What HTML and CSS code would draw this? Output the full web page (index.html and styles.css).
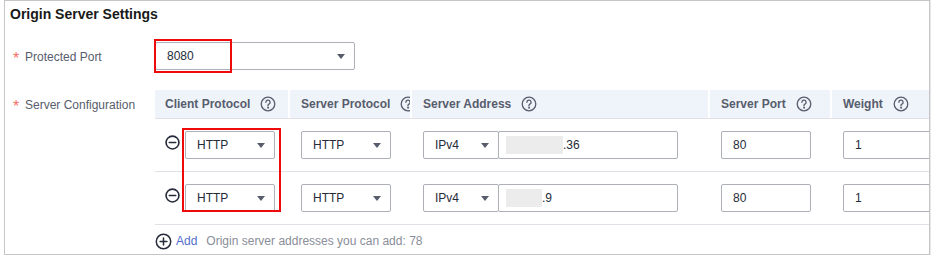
FILE: index.html
```html
<!DOCTYPE html>
<html lang="en">
<head>
  <meta charset="UTF-8">
  <title>Origin Server Settings</title>
  <link rel="stylesheet" href="styles.css">
</head>
<body>
  <div class="panel">
    <h3 class="title">Origin Server Settings</h3>

    <div class="form-row">
      <div class="label"><span class="req">*</span>Protected Port</div>
      <div class="select port-select"><span>8080</span></div>
    </div>

    <div class="form-row config-row">
      <div class="label"><span class="req">*</span>Server Configuration</div>
      <div class="table">
        <div class="thead">
          <div class="th">Client Protocol <svg class="help" viewBox="0 0 16 16"><circle cx="8" cy="8" r="6.8"/><path d="M5.9 6.3a2.1 2.1 0 1 1 3 1.9c-.6.3-.9.7-.9 1.4v.5"/><circle class="dot" cx="8" cy="11.8" r=".55"/></svg></div>
          <div class="th">Server Protocol <svg class="help" viewBox="0 0 16 16"><circle cx="8" cy="8" r="6.8"/><path d="M5.9 6.3a2.1 2.1 0 1 1 3 1.9c-.6.3-.9.7-.9 1.4v.5"/><circle class="dot" cx="8" cy="11.8" r=".55"/></svg></div>
          <div class="th">Server Address <svg class="help" viewBox="0 0 16 16"><circle cx="8" cy="8" r="6.8"/><path d="M5.9 6.3a2.1 2.1 0 1 1 3 1.9c-.6.3-.9.7-.9 1.4v.5"/><circle class="dot" cx="8" cy="11.8" r=".55"/></svg></div>
          <div class="th">Server Port <svg class="help" viewBox="0 0 16 16"><circle cx="8" cy="8" r="6.8"/><path d="M5.9 6.3a2.1 2.1 0 1 1 3 1.9c-.6.3-.9.7-.9 1.4v.5"/><circle class="dot" cx="8" cy="11.8" r=".55"/></svg></div>
          <div class="th">Weight <svg class="help" viewBox="0 0 16 16"><circle cx="8" cy="8" r="6.8"/><path d="M5.9 6.3a2.1 2.1 0 1 1 3 1.9c-.6.3-.9.7-.9 1.4v.5"/><circle class="dot" cx="8" cy="11.8" r=".55"/></svg></div>
        </div>

        <div class="tr">
          <div class="td first">
            <svg class="remove" viewBox="0 0 14 14"><circle cx="7" cy="7" r="6"/><path d="M4 7h6"/></svg>
            <div class="select proto"><span>HTTP</span></div>
          </div>
          <div class="td"><div class="select proto"><span>HTTP</span></div></div>
          <div class="td">
            <div class="select ipver"><span>IPv4</span></div>
            <div class="input address"><span class="masked w57"></span>.36</div>
          </div>
          <div class="td"><div class="input small">80</div></div>
          <div class="td"><div class="input small">1</div></div>
        </div>

        <div class="tr">
          <div class="td first">
            <svg class="remove" viewBox="0 0 14 14"><circle cx="7" cy="7" r="6"/><path d="M4 7h6"/></svg>
            <div class="select proto"><span>HTTP</span></div>
          </div>
          <div class="td"><div class="select proto"><span>HTTP</span></div></div>
          <div class="td">
            <div class="select ipver"><span>IPv4</span></div>
            <div class="input address"><span class="masked w36"></span>.9</div>
          </div>
          <div class="td"><div class="input small">80</div></div>
          <div class="td"><div class="input small">1</div></div>
        </div>

        <div class="add-row">
          <svg class="add-icon" viewBox="0 0 16 16"><circle cx="8" cy="8" r="6.8"/><path d="M8 4.8v6.4M4.8 8h6.4"/></svg>
          <a class="add-link" href="#">Add</a>
          <span class="add-hint">Origin server addresses you can add: 78</span>
        </div>
      </div>
    </div>

    <!-- highlight marks -->
    <div class="mark mark-port"></div>
    <div class="mark mark-proto"></div>
  </div>
</body>
</html>
```

FILE: styles.css
```css
* { margin: 0; padding: 0; box-sizing: border-box; }
body {
  background: #fff;
  font-family: "Liberation Sans", Arial, sans-serif;
  font-size: 12px;
  color: #252b3a;
}
.panel {
  position: relative;
  width: 926px;
  height: 255px;
  margin-left: 4px;
  border: 1px solid #c6c6c6;
  box-shadow: 1px 0 0 #e6e6e6;
  overflow: hidden;
}
.title {
  font-size: 14px;
  font-weight: bold;
  line-height: 20px;
  padding: 3px 0 0 5px;
  color: #191919;
}
.form-row {
  display: flex;
  align-items: flex-start;
  margin-top: 18px;
}
.config-row { margin-top: 19px; }
.label {
  width: 150px;
  flex: none;
  padding-left: 8px;
  line-height: 28px;
  color: #575d6c;
}
.req {
  display: inline-block;
  width: 7px;
  color: #f66f6a;
  font-size: 16px;
  margin-right: 5px;
  position: relative;
  top: 3px;
}

/* select / input mocks */
.select, .input {
  height: 28px;
  border: 1px solid #adb0b8;
  border-radius: 2px;
  background: #fff;
  display: flex;
  align-items: center;
  color: #252b3a;
  flex: none;
}
.select {
  justify-content: space-between;
  padding: 0 9px 0 11px;
}
.select::after {
  content: "";
  border-left: 4px solid transparent;
  border-right: 4px solid transparent;
  border-top: 5px solid #575d6c;
}
.port-select { width: 200px; }
.proto { width: 90px; }
.ipver { width: 76px; }
.input { padding: 0 11px; }
.small { width: 90px; }
.address {
  width: 180px;
  margin-left: -1px;
  padding-left: 7px;
}
.masked {
  display: inline-block;
  height: 18px;
  background: #ececec;
}
.w57 { width: 57px; }
.w36 { width: 36px; }

/* table */
.table {
  flex: none;
  width: 820px;
}
.thead, .tr {
  display: grid;
  grid-template-columns: 135px 122px 298px 122px 143px;
  border-bottom: 1px solid #dfe1e6;
}
.thead {
  height: 29px;
  background: #eff3fa;
}
.th {
  display: flex;
  align-items: center;
  gap: 10px;
  padding-left: 11px;
  font-weight: bold;
  color: #575d6c;
  white-space: nowrap;
  overflow: hidden;
  border-right: 2px solid #fff;
}
.th:first-child { padding-left: 10px; }
.help {
  width: 16px;
  height: 16px;
  flex: none;
  fill: none;
  stroke: #575d6c;
  stroke-width: 1.3;
  stroke-linecap: round;
}
.help .dot { fill: #575d6c; stroke-width: 0.8; }
.tr { height: 53px; }
.td {
  display: flex;
  align-items: flex-start;
  padding: 12px 0 0 11px;
}
.td.first { padding-left: 10px; }
.remove {
  width: 15px;
  height: 15px;
  margin: 4px 5px 0 0;
  fill: none;
  stroke: #252b3a;
  stroke-width: 1.5;
  stroke-linecap: round;
  flex: none;
}

.add-row {
  display: flex;
  align-items: center;
  height: 29px;
  padding-top: 3px;
}
.add-icon {
  width: 17px;
  height: 17px;
  fill: none;
  stroke: #252b3a;
  stroke-width: 1.4;
  stroke-linecap: round;
  margin-right: 4px;
}
.add-link {
  color: #526ecc;
  text-decoration: none;
  margin-right: 9px;
}
.add-hint { color: #8a8e99; }

/* red highlight marks */
.mark {
  position: absolute;
  border: 2px solid #ee0a0a;
}
.mark-port {
  left: 149px;
  top: 38px;
  width: 78px;
  height: 34px;
}
.mark-proto {
  left: 177px;
  top: 127px;
  width: 99px;
  height: 84px;
}
```
